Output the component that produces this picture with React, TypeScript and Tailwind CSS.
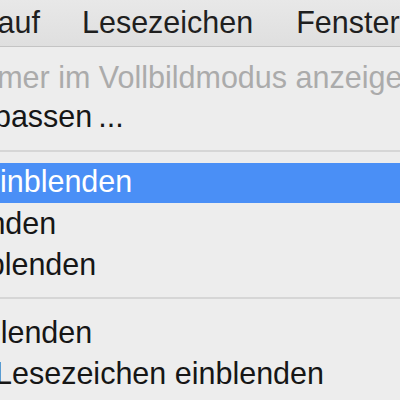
import React from "react";

const font = { fontFamily: '"Liberation Sans", Arial, sans-serif' };

function Row({ h, ml, text, tone = "normal", extra = "" }: { h: string; ml: string; text: string; tone?: "normal" | "disabled" | "active"; extra?: string }) {
  const color =
    tone === "disabled" ? "text-[#ababab]" : tone === "active" ? "text-white bg-[#4a8ff6]" : "text-[#161616]";
  return (
    <div className={`flex items-center whitespace-nowrap ${h} ${color} ${extra}`}>
      <span className={ml}>{text}</span>
    </div>
  );
}

export default function App() {
  return (
    <div className="w-[400px] h-[400px] overflow-hidden bg-[#ededed] text-[30.5px]" style={font}>
      <div className="h-[47px] flex items-center whitespace-nowrap bg-gradient-to-b from-[#e8e8e8] to-[#dfdfdf] text-[#1f1f1f] border-b border-[#c4c4c4]">
        <span className="ml-[-55px]">Verlauf</span>
        <span className="ml-[42px]">Lesezeichen</span>
        <span className="ml-[43px]">Fenster</span>
      </div>
      <div className="pt-[12px]">
        <Row h="h-[38px]" ml="ml-[-35px]" text="immer im Vollbildmodus anzeigen" tone="disabled" />
        <div className="flex items-center whitespace-nowrap h-[39px] text-[#161616]">
          <span className="ml-[-40px]">anpassen</span>
          <span className="ml-[6px]">...</span>
        </div>
        <div className="mt-[14px] mb-[11px] h-[2px] bg-[#d6d6d6]" />
        <Row h="h-[40px]" ml="ml-[-17px]" text="einblenden" tone="active" extra="pb-[2px]" />
        <Row h="h-[41px]" ml="ml-[-93px]" text="einblenden" />
        <Row h="h-[41px]" ml="ml-[-53px]" text="einblenden" />
        <div className="mt-[12px] mb-[13px] h-[2px] bg-[#d6d6d6]" />
        <Row h="h-[41px]" ml="ml-[-57px]" text="einblenden" />
        <Row h="h-[41px]" ml="ml-[-5px]" text="Lesezeichen einblenden" />
      </div>
    </div>
  );
}
